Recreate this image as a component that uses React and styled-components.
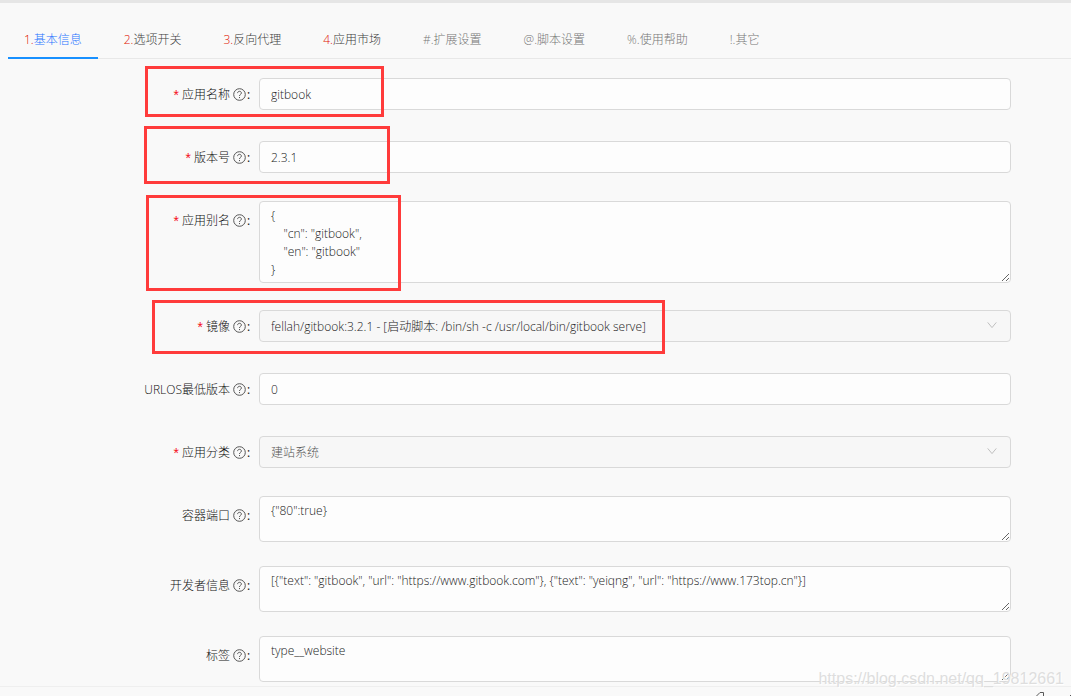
import React from "react";
import styled, { createGlobalStyle } from "styled-components";

const GlobalStyle = createGlobalStyle`
  *, *::before, *::after { box-sizing: border-box; }
  body {
    margin: 0;
    background: #f9f9f9;
    color: #333;
    font-family: "Open Sans", "Noto Sans CJK SC", sans-serif;
    font-size: 12px;
    font-weight: 300;
  }
`;

const Page = styled.main`
  position: relative;
  border-top: 3px solid #e6e6e6;
`;

const TabBar = styled.nav`
  display: flex;
  gap: 10px;
  margin-left: 8px;
  padding-top: 18px;
  border-bottom: 1px solid #e8e8e8;
`;

const Tab = styled.button`
  height: 38px;
  margin-bottom: -1px;
  padding: 2px 16px 0;
  border: 0;
  border-bottom: 2px solid ${(p) => (p.$active ? "#1890ff" : "transparent")};
  background: none;
  color: ${(p) => (p.$active ? "#1f74ff" : p.$muted ? "#777" : "#404040")};
  font: inherit;
  line-height: 34px;
  white-space: nowrap;
`;

const TabNumber = styled.span`
  color: #e01000;
`;

const Form = styled.form`
  padding: 15px 60px 0 0;
`;

const Row = styled.div`
  display: grid;
  grid-template-columns: 259px minmax(0, 1fr);
  align-items: start;
  padding-top: ${(p) => (p.$multiline ? "1px" : "0")};
  margin-bottom: ${(p) => (p.$last ? "4px" : "23px")};
`;

const Label = styled.label`
  display: flex;
  align-items: center;
  justify-content: flex-end;
  height: ${(p) => (p.$multiline ? "38px" : "40px")};
  padding-right: 8px;
  color: #111;
  white-space: nowrap;
`;

const Required = styled.span`
  width: 10px;
  padding-top: 6px;
  color: #f5121d;
  font-family: "Liberation Mono", monospace;
  font-size: 14px;
  font-weight: 400;
  line-height: 14px;
`;

const Colon = styled.span`
  width: 4px;
  font-weight: 400;
`;

const HelpIcon = styled.svg`
  width: 13px;
  height: 13px;
  margin: 0 1px 0 3px;
`;

const Control = styled.div`
  position: relative;
  display: flex;
  padding: ${(p) => (p.$multiline ? "0" : "4px 0")};
`;

const fieldStyle = `
  width: 100%;
  margin: 0;
  border: 1px solid #d9d9d9;
  border-radius: 4px;
  background: #fdfdfd;
  color: #222;
  font: inherit;
  outline: none;
`;

const Input = styled.input`
  ${fieldStyle}
  height: 32px;
  padding: 0 11px;
`;

const Select = styled.select`
  ${fieldStyle}
  appearance: none;
  height: 32px;
  padding: 0 32px 0 11px;
  background: #f7f7f7;
  color: ${(p) => (p.$muted ? "#555" : "#222")};
`;

const TextArea = styled.textarea`
  ${fieldStyle}
  display: block;
  height: ${(p) => (p.$tall ? "82px" : "46px")};
  padding: 5px 11px 3px;
  line-height: 18px;
  overflow: hidden;
  resize: vertical;
`;

const Chevron = styled.svg`
  position: absolute;
  top: 14px;
  right: 14px;
  width: 10px;
  height: 10px;
  pointer-events: none;
`;

const Highlight = styled.div`
  position: absolute;
  left: ${(p) => p.$x}px;
  top: ${(p) => p.$y}px;
  width: ${(p) => p.$w}px;
  height: ${(p) => p.$h}px;
  border: 3px solid #ff3b3b;
  pointer-events: none;
`;

const Footer = styled.footer`
  display: flex;
  justify-content: flex-end;
  gap: 25px;
  height: 10px;
  padding-top: 5px;
  border-top: 1px solid #efefef;
  overflow: hidden;
`;

const Watermark = styled.div`
  position: absolute;
  right: 7px;
  bottom: 7px;
  color: #dedede;
  font-family: "Liberation Sans", Arial, sans-serif;
  font-size: 16px;
  font-weight: 400;
  line-height: 20px;
  text-shadow: 1px 1px 0 #fff;
  pointer-events: none;
`;

const tabs = [
  { mark: "1.", text: "基本信息", numbered: true, active: true },
  { mark: "2.", text: "选项开关", numbered: true },
  { mark: "3.", text: "反向代理", numbered: true },
  { mark: "4.", text: "应用市场", numbered: true },
  { mark: "#.", text: "扩展设置" },
  { mark: "@.", text: "脚本设置" },
  { mark: "%.", text: "使用帮助" },
  { mark: "!.", text: "其它" },
];

const fields = [
  { id: "name", label: "应用名称", required: true, kind: "input", value: "gitbook" },
  { id: "version", label: "版本号", required: true, kind: "input", value: "2.3.1" },
  {
    id: "alias",
    label: "应用别名",
    required: true,
    kind: "textarea",
    tall: true,
    value: '{\n    "cn": "gitbook",\n    "en": "gitbook"\n}',
  },
  {
    id: "image",
    label: "镜像",
    required: true,
    kind: "select",
    value: "fellah/gitbook:3.2.1 - [启动脚本: /bin/sh -c /usr/local/bin/gitbook serve]",
  },
  { id: "minimum", label: "URLOS最低版本", kind: "input", value: "0" },
  { id: "category", label: "应用分类", required: true, kind: "select", muted: true, value: "建站系统" },
  { id: "ports", label: "容器端口", kind: "textarea", value: '{"80":true}' },
  {
    id: "developer",
    label: "开发者信息",
    kind: "textarea",
    value:
      '[{"text": "gitbook", "url": "https://www.gitbook.com"}, {"text": "yeiqng", "url": "https://www.173top.cn"}]',
  },
  { id: "tags", label: "标签", kind: "textarea", value: "type__website" },
];

const highlights = [
  { x: 145, y: 63, w: 239, h: 51 },
  { x: 144, y: 123, w: 246, h: 58 },
  { x: 146, y: 192, w: 255, h: 96 },
  { x: 152, y: 297, w: 513, h: 54 },
];

function Help() {
  return (
    <HelpIcon viewBox="0 0 13 13" fill="none" stroke="#555" aria-hidden="true">
      <circle cx="6.5" cy="6.5" r="5.8" />
      <path d="M4.6 5.1c0-2.4 3.8-2.4 3.8 0C8.4 6.4 6.5 6.3 6.5 8M6.5 9v1.1" />
    </HelpIcon>
  );
}

function Field({ field }) {
  if (field.kind === "input") {
    return <Input id={field.id} type="text" defaultValue={field.value} />;
  }
  if (field.kind === "select") {
    return (
      <>
        <Select id={field.id} $muted={field.muted} defaultValue={field.value}>
          <option>{field.value}</option>
        </Select>
        <Chevron viewBox="0 0 10 10" fill="none" stroke="#bfbfbf" aria-hidden="true">
          <path d="M0.7 2.4L5 7.6L9.3 2.4" />
        </Chevron>
      </>
    );
  }
  return <TextArea id={field.id} $tall={field.tall} defaultValue={field.value} />;
}

export default function App() {
  return (
    <Page>
      <GlobalStyle />
      <TabBar>
        {tabs.map((tab) => (
          <Tab key={tab.text} type="button" $active={tab.active} $muted={!tab.numbered}>
            {tab.numbered ? <TabNumber>{tab.mark}</TabNumber> : tab.mark}
            {tab.text}
          </Tab>
        ))}
      </TabBar>
      <Form>
        {fields.map((field, i) => {
          const multiline = field.kind === "textarea";
          return (
            <Row key={field.id} $multiline={multiline} $last={i === fields.length - 1}>
              <Label htmlFor={field.id} $multiline={multiline}>
                {field.required && <Required>*</Required>}
                {field.label}
                <Help />
                <Colon>:</Colon>
              </Label>
              <Control $multiline={multiline}>
                <Field field={field} />
              </Control>
            </Row>
          );
        })}
      </Form>
      <Footer>
        <svg width="12" height="12" viewBox="0 0 12 12" fill="none" stroke="#595959" aria-hidden="true">
          <path d="M0 4.5h3L7 0.5h3.5v10" />
        </svg>
        <svg width="1" height="12" viewBox="0 0 1 12" stroke="#595959" aria-hidden="true">
          <path d="M0.5 3v6" />
        </svg>
      </Footer>
      {highlights.map((box) => (
        <Highlight key={box.y} $x={box.x} $y={box.y} $w={box.w} $h={box.h} />
      ))}
      <Watermark>https://blog.csdn.net/qq_19812661</Watermark>
    </Page>
  );
}
